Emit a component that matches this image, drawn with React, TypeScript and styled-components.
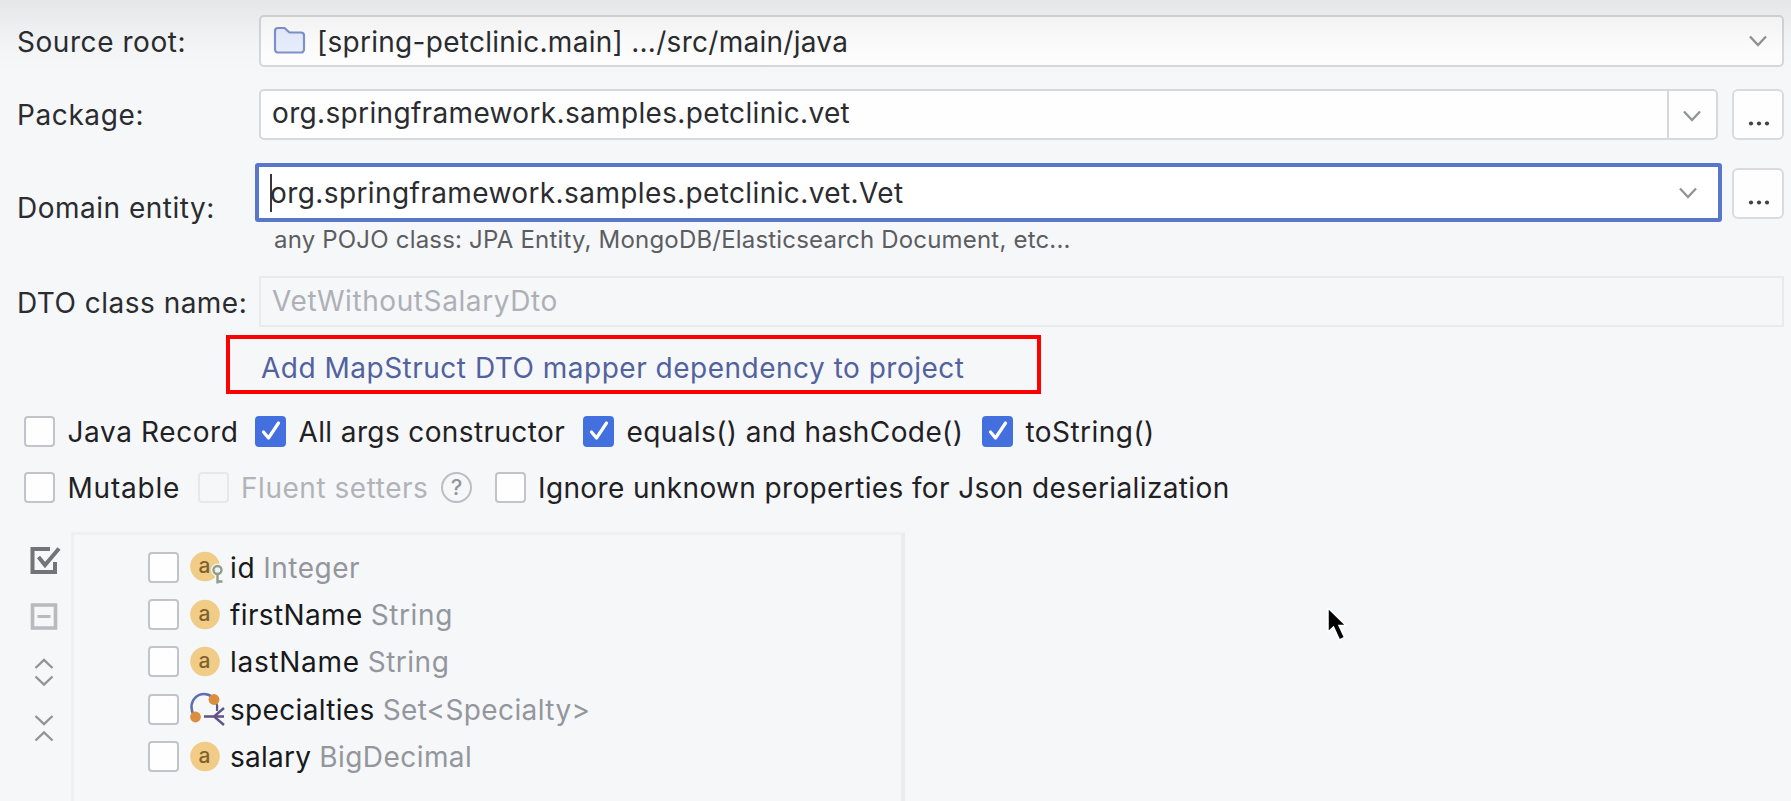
import React from "react";
import styled, { createGlobalStyle, css } from "styled-components";

const GlobalStyle = createGlobalStyle`
  * { box-sizing: border-box; }
  body {
    margin: 0;
    background: #f6f7f9;
    font-family: Inter, "Liberation Sans", sans-serif;
    font-size: 28px;
    color: #2a2c30;
    overflow: hidden;
  }
`;

const Dialog = styled.main`
  position: relative;
  width: 1791px;
  height: 801px;
  overflow: hidden;
  display: flex;
  flex-direction: column;
  background: #f6f7f9;
`;

const TopShade = styled.div`
  position: absolute;
  inset: 0 0 auto 0;
  height: 76px;
  pointer-events: none;
  background: linear-gradient(rgba(0, 0, 0, 0.065), rgba(0, 0, 0, 0.045) 20px, rgba(0, 0, 0, 0.012) 48px, transparent);
`;

const Text = styled.span<{ $spacing?: number; $drop?: number }>`
  display: block;
  white-space: nowrap;
  line-height: 34px;
  letter-spacing: ${(p) => p.$spacing ?? 0.5}px;
  padding-top: ${(p) => Math.max(0, p.$drop ?? 0)}px;
  padding-bottom: ${(p) => Math.max(0, -(p.$drop ?? 0))}px;
`;

const FieldRow = styled.div<{ $height: number; $top: number }>`
  display: flex;
  align-items: center;
  height: ${(p) => p.$height}px;
  margin-top: ${(p) => p.$top}px;
  padding: 0 7px 0 17px;
  flex: none;
`;

const Label = styled.div<{ $width?: number }>`
  width: ${(p) => p.$width ?? 242}px;
  flex: none;
`;

const Field = styled.div<{ $disabled?: boolean }>`
  flex: 1;
  height: 100%;
  display: flex;
  align-items: center;
  padding-left: 11px;
  border: 2px solid ${(p) => (p.$disabled ? "#e8eaed" : "#d6d8dc")};
  border-radius: ${(p) => (p.$disabled ? 1 : 5)}px;
  background: ${(p) => (p.$disabled ? "#f6f7f9" : "#fefeff")};
  ${(p) => p.$disabled && css`color: #aeb0b6;`}
`;

const RootPath = styled.div`
  margin-left: 11px;
`;

const Spacer = styled.div`
  flex: 1;
`;

const ArrowSlot = styled.div<{ $right: number }>`
  margin-right: ${(p) => p.$right}px;
  display: flex;
`;

const ArrowCell = styled.div`
  width: 49px;
  height: 100%;
  border-left: 2px solid #d6d8dc;
  display: flex;
  align-items: center;
  justify-content: center;
  padding: 3px 2px 0 0;
`;

const MoreButton = styled.button`
  width: 52px;
  height: 51px;
  flex: none;
  margin: 0 0 0 14px;
  padding: 17px 0 0 2px;
  border: 2px solid #d9dbdf;
  border-radius: 6px;
  background: #fefeff;
  display: flex;
  align-items: center;
  justify-content: center;
`;

const EntityColumn = styled.div`
  flex: 1;
  height: 100%;
`;

const EntityControls = styled.div`
  display: flex;
  height: 59px;
`;

const FocusedField = styled.div`
  width: 1467px;
  height: 59px;
  display: flex;
  align-items: center;
  padding-left: 11px;
  border: 4px solid #5877cb;
  border-radius: 3px;
  background: #ffffff;
`;

const Caret = styled.span`
  width: 2px;
  height: 38px;
  margin-right: -2px;
  background: #34373c;
`;

const EntityMore = styled.div`
  padding-top: 5px;
  margin-left: -4px;
`;

const Hint = styled.div`
  height: 31px;
  line-height: 34px;
  padding: 1px 0 0 19px;
  font-size: 24px;
  letter-spacing: 0.19px;
  color: #5b5d61;
  white-space: nowrap;
`;

const LinkFrame = styled.div`
  flex: none;
  width: 815px;
  height: 59px;
  margin: 8px 0 0 226px;
  padding: 6px 0 0 31px;
  border: 4px solid #fe0000;
  color: #51629f;
  display: flex;
  align-items: center;
`;

const CheckRow = styled.div<{ $top: number }>`
  display: flex;
  align-items: center;
  flex: none;
  height: 30px;
  margin-top: ${(p) => p.$top}px;
  padding-left: 24px;
`;

const CheckItem = styled.div<{ $width?: number; $disabled?: boolean }>`
  display: flex;
  align-items: center;
  flex: none;
  gap: 12.5px;
  width: ${(p) => (p.$width ? `${p.$width}px` : "auto")};
  color: ${(p) => (p.$disabled ? "#b1b3b8" : "#1f2124")};
`;

const Box = styled.span<{ $checked?: boolean; $disabled?: boolean }>`
  width: 31px;
  height: 31px;
  flex: none;
  display: flex;
  align-items: center;
  justify-content: center;
  border-radius: 4px;
  border: 2px solid ${(p) => (p.$checked ? "#4470df" : p.$disabled ? "#e6e8eb" : "#c2c4c9")};
  background: ${(p) => (p.$checked ? "#4470df" : p.$disabled ? "#f6f7f9" : "#fefeff")};
`;

const HelpBadge = styled.span`
  width: 31px;
  height: 31px;
  flex: none;
  border: 2px solid #bcbec3;
  border-radius: 50%;
  color: #92949a;
  font-size: 22px;
  font-weight: 500;
  line-height: 27px;
  text-align: center;
`;

const Body = styled.section`
  display: flex;
  flex: 1;
  margin-top: 30px;
`;

const Toolbar = styled.div`
  width: 71px;
  padding: 12px 0 0 29px;
  display: flex;
  flex-direction: column;
  gap: 24px;
`;

const Tree = styled.div`
  width: 834px;
  border: solid #eff0f3;
  border-width: 3px 4px 0 3px;
  border-right-color: #ebecef;
  padding: 8.5px 0 0 74px;
`;

const TreeRow = styled.div`
  display: flex;
  align-items: center;
  height: 47.4px;
`;

const IconSlot = styled.span`
  width: 40px;
  margin-left: 11px;
  height: 34px;
  display: flex;
`;

const TypeName = styled.span`
  margin-left: 8px;
  color: #94969d;
`;

const Name = styled.span`
  color: #17191c;
`;

const Pointer = styled.svg`
  position: absolute;
  left: 1323px;
  top: 603px;
`;

const Chevron = () => (
  <svg width="20" height="14" viewBox="0 0 20 14" fill="none" stroke="#929499" strokeWidth="2.4">
    <path d="M2 2.5 10 11l8-8.5" />
  </svg>
);

const Dots = () => (
  <svg width="22" height="5" viewBox="0 0 22 5" fill="#404247">
    <circle cx="3" cy="2.5" r="2.1" />
    <circle cx="11" cy="2.5" r="2.1" />
    <circle cx="19" cy="2.5" r="2.1" />
  </svg>
);

const Folder = () => (
  <svg width="34" height="30" viewBox="0 0 34 30" fill="#e8effd" stroke="#7f92cc" strokeWidth="2.2" strokeLinejoin="round">
    <path d="M3 5a3 3 0 0 1 3-3h6.500l5 4.500H29a3 3 0 0 1 3 3v14a3 3 0 0 1-3 3H6a3 3 0 0 1-3-3z" />
  </svg>
);

const Tick = () => (
  <svg width="24" height="24" viewBox="0 0 24 24" fill="none" stroke="#fff" strokeWidth="3.2" strokeLinecap="round" strokeLinejoin="round">
    <path d="M4.5 13l5 6L19.500 4" />
  </svg>
);

const Attribute = ({ keyed }: { keyed?: boolean }) => (
  <svg width="36" height="34" viewBox="0 0 36 34">
    <circle cx="15" cy="16.5" r="14.8" fill="#f1cc86" />
    <text x="14.5" y="22.5" textAnchor="middle" fontFamily="Inter" fontSize="21" fontWeight="500" fill="#80622f">a</text>
    {keyed && (
      <g fill="none" stroke="#f6f7f9" strokeWidth="5">
        <circle cx="27.500" cy="20" r="4" />
        <path d="M27.500 24V34" />
      </g>
    )}
    {keyed && (
      <g fill="none" stroke="#8f9c8f" strokeWidth="2.4">
        <circle cx="27.500" cy="20" r="4" fill="#f1f3ee" />
        <path d="M27.500 24V33.500M27.500 31.500h5" />
      </g>
    )}
  </svg>
);

const Relation = () => (
  <svg width="36" height="34" viewBox="0 0 36 34" fill="none">
    <path d="M4 23A13 13 0 0 1 1.500 15C1.500 7.500 7.500 2 14 2c3.500 0 6 1.200 8 3" stroke="#5d6fae" strokeWidth="2.6" />
    <path d="M26 10c1.500 3 1.500 6 1 9" stroke="#5d5488" strokeWidth="2.2" />
    <path d="M14 24.500h20M34 16l-10 8.500 10 8.500" stroke="#5f5388" strokeWidth="2.4" />
    <circle cx="24" cy="7.500" r="5.400" fill="#dc8d3e" />
    <circle cx="5.500" cy="25" r="5.400" fill="#dc8d3e" />
  </svg>
);

const SelectAll = () => (
  <svg width="34" height="32" viewBox="0 0 34 32" fill="none" stroke="#727479">
    <path d="M21 5H3.500v23h22.500V18" strokeWidth="4" />
    <path d="M9.500 13l6.500 8L30 4.500" strokeWidth="4" />
  </svg>
);

const UnselectAll = () => (
  <svg width="34" height="32" viewBox="0 0 34 32" fill="none" stroke="#b8babe">
    <path d="M3.500 5h23v23h-23z" strokeWidth="3.600" />
    <path d="M8.500 16.500h13" strokeWidth="3" />
  </svg>
);

const ExpandAll = () => (
  <svg width="34" height="32" viewBox="0 0 34 32" fill="none" stroke="#929499" strokeWidth="2.400">
    <path d="M6.500 12 15 4l8.500 8M6.500 20.500 15 28.500l8.500-8" />
  </svg>
);

const CollapseAll = () => (
  <svg width="34" height="32" viewBox="0 0 34 32" fill="none" stroke="#929499" strokeWidth="2.400">
    <path d="M6.500 4 15 12l8.500-8M6.500 28.500 15 20.500l8.500 8" />
  </svg>
);

type CheckProps = { label: string; spacing: number; width?: number; checked?: boolean; disabled?: boolean; children?: React.ReactNode };

const Check = ({ label, spacing, width, checked, disabled, children }: CheckProps) => (
  <CheckItem $width={width} $disabled={disabled}>
    <Box $checked={checked} $disabled={disabled}>{checked && <Tick />}</Box>
    <Text $spacing={spacing} $drop={2}>{label}</Text>
    {children}
  </CheckItem>
);

const attributes = [
  { name: "id", type: "Integer", ns: 0.7, ts: 0.48, icon: <Attribute keyed /> },
  { name: "firstName", type: "String", ns: 0.38, ts: 0.6, icon: <Attribute /> },
  { name: "lastName", type: "String", ns: 0.7, ts: 0.5, icon: <Attribute /> },
  { name: "specialties", type: "Set<Specialty>", ns: 0.33, ts: 0.4, icon: <Relation /> },
  { name: "salary", type: "BigDecimal", ns: 0.25, ts: 0.44, icon: <Attribute /> },
];

export default function App() {
  return (
    <Dialog>
      <GlobalStyle />
      <FieldRow $height={52} $top={15}>
        <Label><Text $spacing={0.55} $drop={2}>Source root:</Text></Label>
        <Field>
          <Folder />
          <RootPath><Text $spacing={0.28} $drop={2}>[spring-petclinic.main] .../src/main/java</Text></RootPath>
          <Spacer />
          <ArrowSlot $right={14}><Chevron /></ArrowSlot>
        </Field>
      </FieldRow>

      <FieldRow $height={51} $top={22}>
        <Label><Text $spacing={0.6}>Package:</Text></Label>
        <Field>
          <Text $spacing={0.34} $drop={-3}>org.springframework.samples.petclinic.vet</Text>
          <Spacer />
          <ArrowCell><Chevron /></ArrowCell>
        </Field>
        <MoreButton aria-label="Browse packages"><Dots /></MoreButton>
      </FieldRow>

      <FieldRow $height={90} $top={23}>
        <Label $width={238}><Text $spacing={0.5}>Domain entity:</Text></Label>
        <EntityColumn>
          <EntityControls>
            <FocusedField>
              <Caret />
              <Text $spacing={0.4}>org.springframework.samples.petclinic.vet.Vet</Text>
              <Spacer />
              <ArrowSlot $right={20}><Chevron /></ArrowSlot>
            </FocusedField>
            <EntityMore>
              <MoreButton aria-label="Browse entities"><Dots /></MoreButton>
            </EntityMore>
          </EntityControls>
          <Hint>any POJO class: JPA Entity, MongoDB/Elasticsearch Document, etc...</Hint>
        </EntityColumn>
      </FieldRow>

      <FieldRow $height={51} $top={23}>
        <Label><Text $spacing={0.48} $drop={2}>DTO class name:</Text></Label>
        <Field $disabled><Text $spacing={0.59} $drop={-1}>VetWithoutSalaryDto</Text></Field>
      </FieldRow>

      <LinkFrame><Text $spacing={0.5}>Add MapStruct DTO mapper dependency to project</Text></LinkFrame>

      <CheckRow $top={22}>
        <Check label="Java Record" spacing={0.6} width={231} />
        <Check label="All args constructor" spacing={0.38} width={328} checked />
        <Check label="equals() and hashCode()" spacing={0.4} width={399} checked />
        <Check label="toString()" spacing={0.45} checked />
      </CheckRow>
      <CheckRow $top={26}>
        <Check label="Mutable" spacing={0.8} width={173.5} />
        <Check label="Fluent setters" spacing={0.54} width={297} disabled>
          <HelpBadge>?</HelpBadge>
        </Check>
        <Check label="Ignore unknown properties for Json deserialization" spacing={0.37} />
      </CheckRow>

      <Body>
        <Toolbar>
          <SelectAll />
          <UnselectAll />
          <ExpandAll />
          <CollapseAll />
        </Toolbar>
        <Tree>
          {attributes.map((a) => (
            <TreeRow key={a.name}>
              <Box />
              <IconSlot>{a.icon}</IconSlot>
              <Name><Text $spacing={a.ns} $drop={1}>{a.name}</Text></Name>
              <TypeName><Text $spacing={a.ts} $drop={1}>{a.type}</Text></TypeName>
            </TreeRow>
          ))}
        </Tree>
      </Body>

      <TopShade />
      <Pointer width="30" height="42" viewBox="0 0 30 42">
        <path d="M5 5v24l5.500-5 6 13 5-2.500-5.500-12H23z" fill="#000" stroke="#fff" strokeWidth="1.500" />
      </Pointer>
    </Dialog>
  );
}
